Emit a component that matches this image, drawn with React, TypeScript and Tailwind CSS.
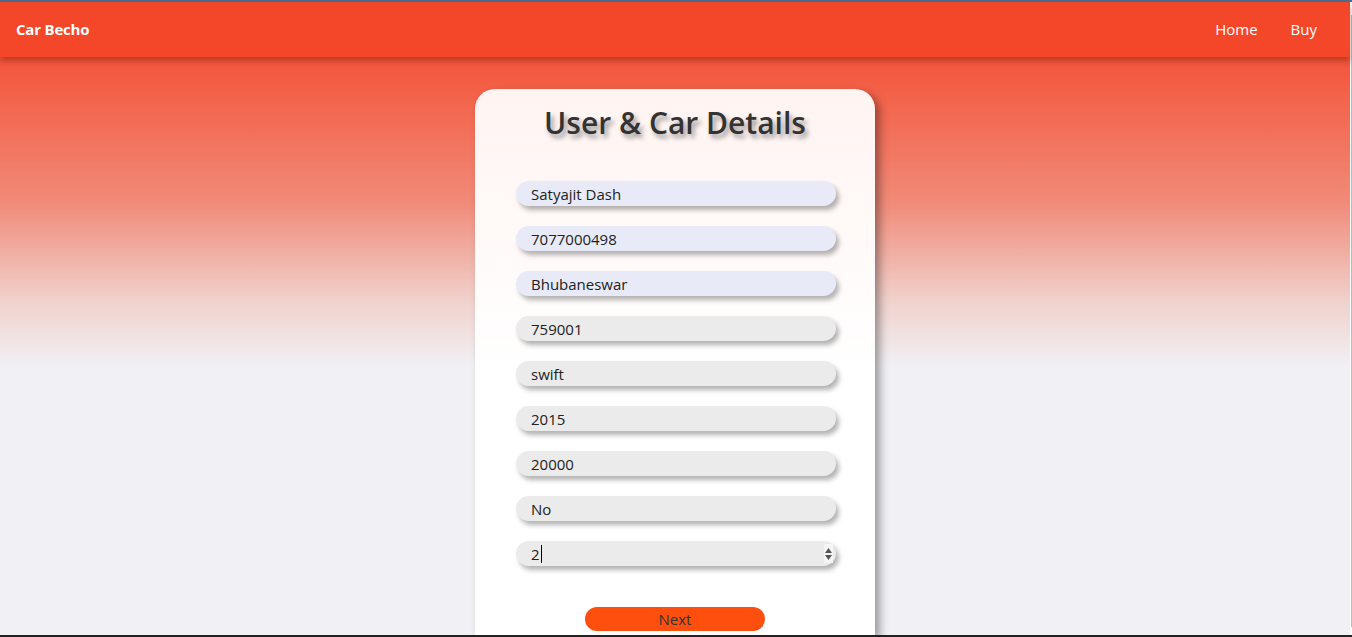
import React from 'react'

const font = { fontFamily: '"Open Sans", "Noto Sans", Arial, sans-serif' }

const fields = [
  { value: 'Satyajit Dash', filled: true },
  { value: '7077000498', filled: true },
  { value: 'Bhubaneswar', filled: true },
  { value: '759001' },
  { value: 'swift' },
  { value: '2015' },
  { value: '20000' },
  { value: 'No' },
]

function Field({ value, filled }: { value: string; filled?: boolean }) {
  return (
    <input
      readOnly
      value={value}
      className={`h-[25px] w-[320px] rounded-full px-[15px] text-[15px] text-[#222] shadow-[3px_4px_5px_rgba(0,0,0,0.3)] outline-none ${
        filled ? 'bg-[#e8ebf7]' : 'bg-[#ebebeb]'
      }`}
    />
  )
}

export default function App() {
  return (
    <div style={font} className="flex h-[637px] w-full flex-col overflow-hidden border-t-2 border-b-2 border-t-[#4b6b8c] border-b-[#222] bg-[#f0f0f5]">
      <div className="flex min-h-0 flex-1">
        <div className="relative flex min-w-0 flex-1 flex-col bg-[linear-gradient(to_bottom,#f34a2b_0px,#f4563c_60px,#f08a78_200px,#f0d2cd_300px,#f0f0f5_365px,#f0f0f5_100%)]">
          <nav className="relative z-10 flex h-[55px] shrink-0 items-center justify-between bg-[#f44628] pr-[33px] pl-4 shadow-[0_4px_6px_rgba(120,30,10,0.45)]">
            <span className="text-[15px] font-bold tracking-[-0.2px] text-white">Car Becho</span>
            <div className="flex items-center gap-[33px] text-[15px] text-white">
              <span>Home</span>
              <span>Buy</span>
            </div>
          </nav>
          <div className="flex flex-1 justify-center pt-8">
            <div className="flex w-[400px] flex-col items-center rounded-t-[20px] bg-[linear-gradient(to_bottom,#fff4f2,#ffffff_280px)] pt-[12px] shadow-[5px_4px_8px_rgba(0,0,0,0.35)]">
              <h1 className="text-[30px] leading-[44px] font-semibold text-[#333] [text-shadow:3px_4px_5px_rgba(0,0,0,0.4)]">
                User &amp; Car Details
              </h1>
              <div className="mt-[36px] ml-[2px] flex flex-col gap-5">
                {fields.map((f) => (
                  <Field key={f.value} value={f.value} filled={f.filled} />
                ))}
                <div className="relative">
                  <Field value="2" />
                  <span className="absolute top-[4px] left-[25px] h-[18px] w-px bg-black" />
                  <span className="absolute top-[3px] right-[3px] flex h-[19px] w-[9px] flex-col items-center justify-center gap-[2px] bg-[#f5f5f5]">
                    <svg width="7" height="5" viewBox="0 0 7 5">
                      <path d="M3.5 0 L7 5 L0 5 Z" fill="#555" />
                    </svg>
                    <svg width="7" height="5" viewBox="0 0 7 5">
                      <path d="M0 0 L7 0 L3.5 5 Z" fill="#555" />
                    </svg>
                  </span>
                </div>
              </div>
              <button className="mt-[41px] h-[24px] w-[180px] rounded-full bg-[#ff4f0f] text-[15px] leading-none text-[#333]">
                Next
              </button>
            </div>
          </div>
        </div>
        <div className="flex w-[2px] shrink-0 bg-white">
          <div className="mt-[13px] mb-[8px] ml-auto w-[1px] bg-[#bbb]" />
        </div>
      </div>
    </div>
  )
}
